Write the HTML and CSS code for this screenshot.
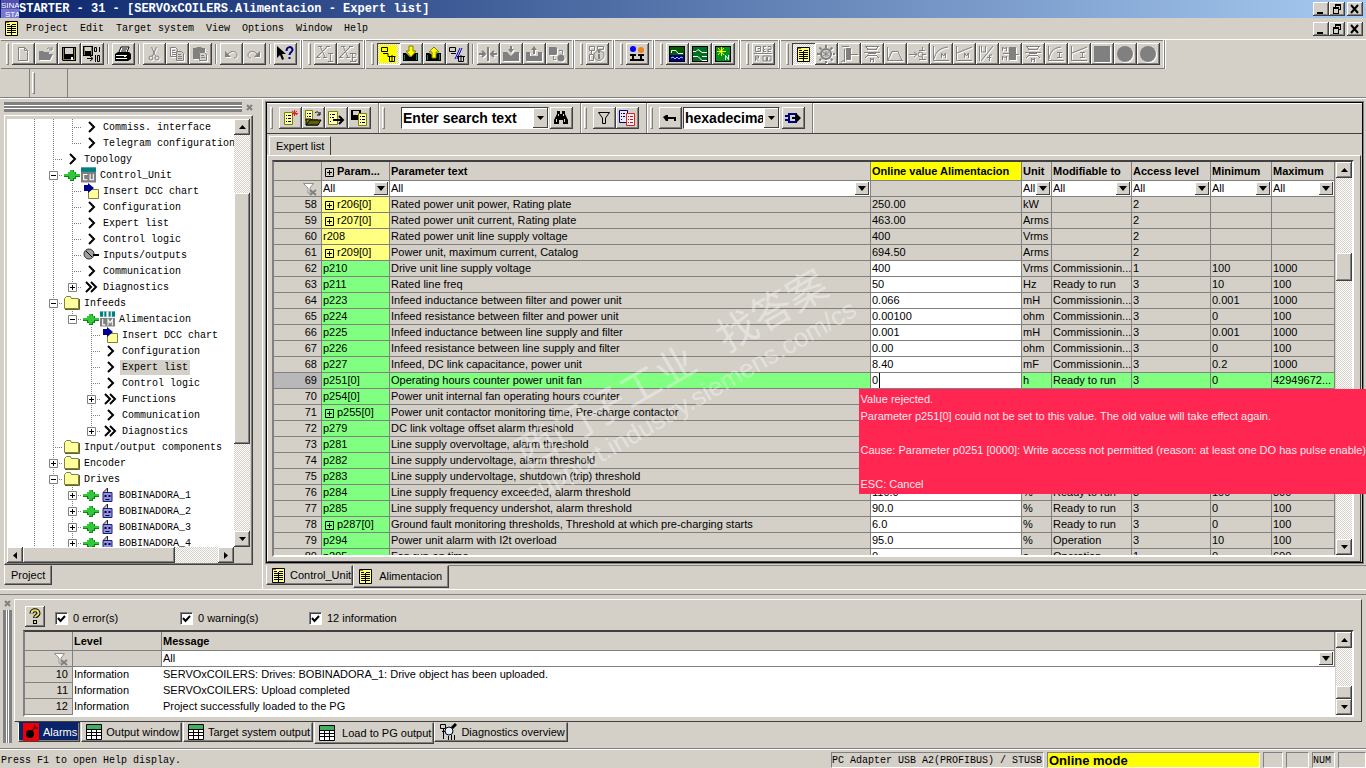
FILE: index.html
```html
<!DOCTYPE html>
<html lang="en">
<head>
    <meta charset="UTF-8">
    <meta name="viewport" content="width=device-width, initial-scale=1.0">
    <title>STARTER - 31 - [SERVOxCOILERS.Alimentacion - Expert list]</title>
    <link rel="stylesheet" href="styles.css">
</head>

<body>
    <!-- Icon sprite -->
    <svg class="sprite" width="0" height="0" aria-hidden="true">
        <symbol id="i-new" viewBox="-1 -1 18 18"><path d="M3.500 1.500h6l3 3v10h-9zM9.500 1.500v3h3" fill="none" stroke="currentColor"/></symbol>
        <symbol id="i-open" viewBox="-1 -1 18 18"><path d="M1 13V5h4l1 1h5v2h4l-3 6H1z" fill="currentColor"/><path d="M9 3c2-2 4-1 5 1M14 1v3h-3" fill="none" stroke="currentColor"/></symbol>
        <symbol id="i-save" viewBox="-1 -1 18 18"><path d="M1 1h14v14H2l-1-1z" fill="#000"/><path d="M2 2h1v11h10V2h1v12H2z" fill="#808040"/><path d="M4 2h8v6H4z" fill="#d4d0c8"/><path d="M10 11h2v3h-2z" fill="#fff"/></symbol>
        <symbol id="i-save-bin" viewBox="0 0 18 18"><path d="M0 1h10v10H0z" fill="#000"/><path d="M2 2h6v4H2z" fill="#d4d0c8"/><path d="M1 2h1v8H1zM8 2h1v8H8z" fill="#808040"/><path d="M11.500 2.500h2v4h-2zM16.500 2v5M4 13.500h5M7 11l3 2.500L7 16M12.500 10v7M14.500 10.500h2v6h-2z" fill="none" stroke="#000"/></symbol>
        <symbol id="i-print" viewBox="0 -1 18 18"><path d="M5 6l2-5h8l-2 5" fill="#fff" stroke="#000"/><path d="M8 3h5M7 5h5" stroke="#000"/><path d="M1 8l3-2h11l2 2v5l-3 2H1z" fill="#000"/><path d="M2 9h11v1H2zM2 12h11v1H2z" fill="#fff"/><path d="M10 10.500h2" stroke="#ff0"/></symbol>
        <symbol id="i-cut" viewBox="-1 -1 18 18"><path d="M5.500 1l4 9M10.500 1l-4 9" stroke="currentColor" fill="none"/><circle cx="5" cy="12" r="2" fill="none" stroke="currentColor"/><circle cx="11" cy="12" r="2" fill="none" stroke="currentColor"/></symbol>
        <symbol id="i-copy" viewBox="-1 -1 18 18"><path d="M1.500 1.500h5l2 2v7h-7zM3 4.500h3M3 6.500h4M3 8.500h4" fill="none" stroke="currentColor"/><path d="M7.500 5.500h5l2 2v7h-7z" fill="#d4d0c8" stroke="currentColor"/><path d="M9 8.500h3M9 10.500h4M9 12.500h4" stroke="currentColor"/></symbol>
        <symbol id="i-paste" viewBox="-1 -1 18 18"><path d="M1 2h3l1-1h4l1 1h3v4H7v7H1z" fill="currentColor"/><path d="M7.500 6.500h5l2 2v6h-7z" fill="#d4d0c8" stroke="currentColor"/><path d="M9 9.500h3M9 11.500h4" stroke="currentColor"/></symbol>
        <symbol id="i-undo" viewBox="-1 -1 18 18"><path d="M5 8c3-4 9-3 9 1 0 2-1 3-3 3" fill="none" stroke="currentColor"/><path d="M2 5v6h6z" fill="currentColor"/></symbol>
        <symbol id="i-redo" viewBox="-1 -1 18 18"><path d="M11 8c-3-4-9-3-9 1 0 2 1 3 3 3" fill="none" stroke="currentColor"/><path d="M14 5v6H8z" fill="currentColor"/></symbol>
        <symbol id="i-whats" viewBox="0 -1 18 18"><path d="M1 0v12l3-3 2 5 2-1-2-5h4z" fill="#000"/><path d="M10.500 5c0-5 6-5 6-1 0 2-3 2-3 5" fill="none" stroke="#000080" stroke-width="2"/><path d="M12.500 11h2v2h-2z" fill="#000080"/></symbol>
        <symbol id="i-xi" viewBox="0 -1 18 18"><path d="M4 0l5 11M12 0L1 11" fill="none" stroke="currentColor" stroke-width="1"/><path d="M2 .5h4M10 .5h4M0 11.500h4M7 11.500h4M12 7.500h5M14.500 8v7M12 15.500h5" fill="none" stroke="currentColor"/></symbol>
        <symbol id="i-xe" viewBox="0 -1 18 18"><path d="M4 0l5 11M12 0L1 11" fill="none" stroke="currentColor" stroke-width="1"/><path d="M2 .5h4M10 .5h4M0 11.500h4M7 11.500h4M11 7.500h6v2M13.500 8v7M11 15.500h6v-2M13.500 11.500h3" fill="none" stroke="currentColor"/></symbol>
        <symbol id="i-online" viewBox="0 0 18 18"><path d="M0 0h18v18H0z" fill="#ff0"/><path d="M2.500 2.500h6v4h-6zM4 8.500h5v3h3M9.500 11.500h7M10.500 11.500v5h5v-5M13 10v7" fill="none" stroke="#000"/></symbol>
        <symbol id="i-down" viewBox="0 -1 18 18"><path d="M1 7h3l4 4 5-4h3v8H1z" fill="#000"/><path d="M2 9h1v5H2zM14 8h1v6h-1z" fill="#008080"/><path d="M7 0h4v5h3l-5 6-5-6h3z" fill="#ff0" stroke="#808000"/></symbol>
        <symbol id="i-up" viewBox="0 -1 18 18"><path d="M1 7h3l4 2 5-2h3v8H1z" fill="#000"/><path d="M2 9h1v5H2zM14 8h1v6h-1z" fill="#008080"/><path d="M7 12h4V6h3L9 1 4 6h3z" fill="#ff0" stroke="#808000"/></symbol>
        <symbol id="i-offline" viewBox="-1 -1 18 18"><path d="M.5 1.500h6v4h-6zM2 7.500h5M9.500 10.500h5v5h-5zM8 10.500h8M12 9v7" fill="none" stroke="#000"/><path d="M6 13l5-11M8 13l5-11" stroke="#0000c0"/></symbol>
        <symbol id="i-compare" viewBox="0 -1 18 18"><path d="M0 8h6M3 5l3 3-3 3M18 8h-6M15 5l-3 3 3 3M9 1v14" fill="none" stroke="currentColor" stroke-width="2"/></symbol>
        <symbol id="i-ram" viewBox="0 -1 18 18"><path d="M1 6h4l4 4 4-4h4v9H1zM8 0h2v3h2L9 7 6 3h2z" fill="currentColor"/></symbol>
        <symbol id="i-rom" viewBox="0 -1 18 18"><path d="M1 6h4v4h8V6h4v9H1zM8 8h2V4h2L9 0 6 4h2z" fill="currentColor"/></symbol>
        <symbol id="i-card" viewBox="0 -1 18 18"><path d="M1 1h7l1 1v6l-1 1H1z" fill="currentColor"/><circle cx="13" cy="12" r="3.500" fill="currentColor"/><path d="M11 4.500h3.500V8M5.500 10v3.500H8" fill="none" stroke="currentColor"/></symbol>
        <symbol id="i-info" viewBox="0 0 18 18"><path d="M1.500 1.500h5v4h-5zM9.500 1.500h6v3h-6zM1.500 9.500h4v6h-4zM3.500 6v3" fill="none" stroke="currentColor"/><circle cx="11" cy="10.500" r="5" fill="#d4d0c8" stroke="currentColor"/><path d="M11 9v5M11 6v2" stroke="currentColor" stroke-width="2"/></symbol>
        <symbol id="i-nodes" viewBox="0 0 18 18"><circle cx="5" cy="4" r="3" fill="#00f"/><circle cx="13" cy="5" r="3" fill="#f08020"/><path d="M2 9h6v2H6v3h6v-3h-2V9h6v2h-2v3h2v2H2v-2h2v-3H2z" fill="#000"/></symbol>
        <symbol id="i-trace" viewBox="-1 -1 18 18"><path d="M0 0h16v16H0z" fill="#000"/><path d="M1 1h14v8H1z" fill="#006000"/><path d="M2.500 7V4.500H7l2 3h5" fill="none" stroke="#fff"/><path d="M1 9h14v6H1z" fill="#000080"/><path d="M2 12l2-1 2 2 2-2 2 2 2-2 2 1" fill="none" stroke="#c0c0ff"/></symbol>
        <symbol id="i-fgen" viewBox="-1 -1 18 18"><path d="M0 0h16v16H0z" fill="#000"/><path d="M1 1h14v14H1z" fill="#007020"/><path d="M1 5.500h3l2-2 4 3h5M1 10.500h5l4 4h5M10 10.500h5" fill="none" stroke="#fff"/></symbol>
        <symbol id="i-tune" viewBox="-1 -1 18 18"><path d="M0 0h16v16H0z" fill="#000"/><path d="M1 1h14v14H1z" fill="#009020"/><path d="M6.500 1v9M2 5.500h9M3 2l6 7M9 2L3 9" stroke="#ff0"/><path d="M10.500 14V9.500l3 4V9" fill="none" stroke="#fff"/></symbol>
        <symbol id="i-e2r" viewBox="0 0 18 18"><path d="M1.500 1.500h5v5h-5zM4 3.500h2M9 1.500h3M9.500 1v6M9 4.500h2M9 6.500h3M14 1.500h3v3h-3v2h3M0 8.500h18M1.500 16v-5h3v2h-3l3 3M9 11h8v5H9z" fill="none" stroke="currentColor"/><path d="M12 12h2v4h-2z" fill="currentColor"/></symbol>
        <symbol id="i-list" viewBox="0 0 13 15"><path d="M.5.5h12v14H.5z" fill="#ffff80" stroke="#000"/><path d="M2 3.500h3M7 3.500h4M2 5.500h4M7 5.500h4M2 7.500h4M7 7.500h4M2 9.500h4M7 9.500h4M2 11.500h4M7 11.500h4M6.500 4v10" stroke="#000"/><path d="M1 1h3v1H1z" fill="#c06000"/></symbol>
        <symbol id="i-gear" viewBox="0 0 18 18"><path d="M9 0v18M0 9h18M2.500 2.500l13 13M15.500 2.500l-13 13" stroke="currentColor" stroke-width="2" stroke-dasharray="3 1"/><circle cx="9" cy="9" r="5" fill="#d4d0c8" stroke="currentColor" stroke-width="2"/><path d="M6 7l6 4M6 11l6-4M9 6v6" stroke="currentColor"/></symbol>
        <symbol id="i-brake" viewBox="0 0 18 18"><path d="M6 3h5v12H6z" fill="currentColor"/><path d="M2 1.500h7M11 9.500h7M5 15l-4 2M4.500 4v13" fill="none" stroke="currentColor"/></symbol>
        <symbol id="i-bridge" viewBox="0 0 18 18"><path d="M2 1.500h14M4 4.500h10M1 7.500h16M4 10.500h10M2 1l3 3M16 1l-3 3M2 13l3-3M16 13l-3-3M7.500 17v-4l1.500 2 1.500-2v4" fill="none" stroke="currentColor"/><path d="M5 4h8v1H5zM5 8h8v1H5z" fill="currentColor"/></symbol>
        <symbol id="i-ramp" viewBox="0 0 18 18"><path d="M1.500 2v13.500H17M2 15L6 6.500h6l4 9" fill="none" stroke="currentColor"/></symbol>
        <symbol id="i-limit" viewBox="0 0 18 18"><path d="M0 9.500h8M5 7l3 2.500L5 12M10 5.500h6M13.500 2v4M17 9.500h-4M10 14.500h7M13.500 12v3" fill="none" stroke="currentColor"/><circle cx="11.500" cy="9.500" r="2.500" fill="none" stroke="currentColor"/></symbol>
        <symbol id="i-curve-m" viewBox="0 0 18 18"><path d="M1.500 1v14.500H17M2 14C3 8 7 3 16 2M9.500 13V8l2 3 2-3v5" fill="none" stroke="currentColor"/></symbol>
        <symbol id="i-lin-m" viewBox="0 0 18 18"><path d="M1.500 1v14.500H17M2 8l15-6M9.500 13V8l2 3 2-3v5" fill="none" stroke="currentColor"/></symbol>
        <symbol id="i-uf" viewBox="0 0 18 18"><path d="M3.500 1v6h4V1M3 16L15 1M11.500 16v-6H14M9 12.500h4M1.500 1v15" fill="none" stroke="currentColor"/></symbol>
        <symbol id="i-mblock" viewBox="0 0 18 18"><path d="M8 2h7v13H8z" fill="currentColor"/><path d="M1.500 6V2l2 2 2-2v4M1.500 15v-4l2 2 2-2v4M2 8.500h6M15 9.500h3" fill="none" stroke="currentColor"/></symbol>
        <symbol id="i-curve-i" viewBox="0 0 18 18"><path d="M1.500 1v14.500H17M2 14C3 8 5 3 14 2M10 7.500h5M12.500 7v6M10 12.500h5" fill="none" stroke="currentColor"/></symbol>
        <symbol id="i-lin-i" viewBox="0 0 18 18"><path d="M1.500 1v14.500H17M2 8l15-6M10 7.500h5M12.500 7v6M10 12.500h5" fill="none" stroke="currentColor"/></symbol>
        <symbol id="i-square" viewBox="0 0 18 18"><path d="M1 1h16v16H1z" fill="currentColor"/></symbol>
        <symbol id="i-circle" viewBox="0 0 18 18"><circle cx="9" cy="9" r="8" fill="currentColor"/></symbol>
        <symbol id="i-min" viewBox="0 0 12 10"><path d="M2 8h6v2H2z"/></symbol>
        <symbol id="i-restore" viewBox="0 0 12 10"><path d="M4 0h6v6H8V5h1V2H5v1H4zM2 3h6v7H2zM3 5v4h4V5z" fill-rule="evenodd"/></symbol>
        <symbol id="i-close" viewBox="0 0 12 10"><path d="M2 1l7 8M9 1L2 9" stroke="#000" stroke-width="2"/></symbol>
        <symbol id="i-x" viewBox="0 0 7 7"><path d="M1 1l5 5M6 1L1 6" stroke="#808080" stroke-width="2"/></symbol>
        <symbol id="i-a-up" viewBox="0 0 7 4"><path d="M0 4h7L3.500 0z"/></symbol>
        <symbol id="i-a-down" viewBox="0 0 7 4"><path d="M0 0h7L3.500 4z"/></symbol>
        <symbol id="i-a-left" viewBox="0 0 4 7"><path d="M4 0v7L0 3.500z"/></symbol>
        <symbol id="i-a-right" viewBox="0 0 4 7"><path d="M0 0v7l4-3.500z"/></symbol>
        <symbol id="i-plus" viewBox="0 0 9 9"><path d="M.5.5h8v8h-8z" fill="#fff" stroke="#808080"/><path d="M2 4.500h5M4.500 2v5" stroke="#000"/></symbol>
        <symbol id="i-minus" viewBox="0 0 9 9"><path d="M.5.5h8v8h-8z" fill="#fff" stroke="#808080"/><path d="M2 4.500h5" stroke="#000"/></symbol>
        <symbol id="i-cell-plus" viewBox="0 0 9 9"><path d="M.5.5h8v8h-8zM2 4.500h5M4.500 2v5" fill="none" stroke="#000"/></symbol>
        <symbol id="i-chev" viewBox="0 0 16 16"><path d="M6 3l5 5-5 5" fill="none" stroke="#000" stroke-width="2"/></symbol>
        <symbol id="i-chev2" viewBox="0 0 16 16"><path d="M3 3l5 5-5 5M8 3l5 5-5 5" fill="none" stroke="#000" stroke-width="2"/></symbol>
        <symbol id="i-folder" viewBox="0 0 16 16"><path d="M.5 13.500v-10l2-2h4l1 2h7v10z" fill="#ffff9c" stroke="#808040"/><path d="M1 14.500h14.500V4" fill="none" stroke="#606030"/></symbol>
        <symbol id="i-link" viewBox="0 0 16 16"><path d="M0 7h4V5h2V3h4v2h2v2h4v3h-4v2h-2v2H6v-2H4v-2H0z" fill="#108018"/><path d="M0 7h4V5h2V3h3v2h2v2h5v2H0zM5 9h6v2H5zM6 11h3v2H6z" fill="#30c838"/></symbol>
        <symbol id="i-cu" viewBox="0 0 14 14"><path d="M0 0h14v14H0z" fill="#808080"/><path d="M0 0h14v4H0z" fill="#008080"/><path d="M6 6.500H2.500v5H6M8.500 6v5.500h3V6" fill="none" stroke="#fff"/></symbol>
        <symbol id="i-lm" viewBox="0 0 14 14"><path d="M0 0h14v14H0z" fill="#808080"/><path d="M0 0h14v6H0z" fill="#fff"/><path d="M0 0h3v5H0zM4 0h2v5H4zM8 0h2v5H8zM11 0h3v5h-3z" fill="#008080"/><path d="M2.500 7v5.500H5M7.500 13V7.500l2 3 2-3V13" fill="none" stroke="#fff"/></symbol>
        <symbol id="i-dcc" viewBox="0 0 16 16"><path d="M5.500 6.500h10v9h-10z" fill="#ffff9c" stroke="#808040"/><path d="M1 2h4V0l6 5-6 5V8H1z" fill="#000090"/></symbol>
        <symbol id="i-io" viewBox="0 0 16 16"><circle cx="6" cy="7" r="5" fill="#a0a0a0" stroke="#303030"/><path d="M3 4l6 6" stroke="#000"/><path d="M10 7h6v2h-6z" fill="#000"/></symbol>
        <symbol id="i-drive" viewBox="0 0 14 16"><path d="M2.500 5.500h9v9h-9z" fill="#9090f0" stroke="#202060"/><path d="M3 5l4-4v4" fill="#d4d0c8" stroke="#202020"/><path d="M4 8h2v2H4zM8 8h2v2H8zM5 12h4v1H5z" fill="#000"/></symbol>
        <symbol id="i-filter" viewBox="-1 -1 18 18"><path d="M2.500 2.500h11L9.500 8v5.500h-3V8z" fill="none" stroke="#000"/></symbol>
        <symbol id="i-nofilter" viewBox="0 0 14 13"><path d="M.5.500h10L7 5v5H5V5z" fill="#fff" stroke="#909090"/><path d="M7 7l6 5M13 7l-6 5" stroke="#808080" stroke-width="2"/></symbol>
        <symbol id="i-listnew" viewBox="-1 -1 18 18"><path d="M2.500 2.500h8v12h-8z" fill="#ffffb0" stroke="#808000"/><path d="M4 5.500h1M4 8.500h1M4 11.500h1M6 5.500h3M6 8.500h3M6 11.500h3" stroke="#000"/><path d="M12.500 0v6M10 3.500h6M10 1l5 4M15 1l-5 4" stroke="#e02020"/></symbol>
        <symbol id="i-listopen" viewBox="0 -1 18 18"><path d="M1.500.5h7v10h-7z" fill="#ffffb0" stroke="#808000"/><path d="M3 3.500h1M5 3.500h2M3 6.500h1M5 6.500h2M11 3c2-2 4-1 4 1M16 2v3h-3" fill="none" stroke="#000"/><path d="M2 15V9h5l1 1h6v5z" fill="#808000" stroke="#000"/><path d="M2 15l4-5h11l-3 5z" fill="#606000" stroke="#000"/></symbol>
        <symbol id="i-listgo" viewBox="0 -1 18 18"><path d="M1.500 1.500h9v13h-9z" fill="#ffffb0" stroke="#808000"/><path d="M3 4.500h1M3 7.500h1M3 11.500h1M5 4.500h3M5 7.500h2" stroke="#000"/><path d="M6 10h9M12 6l4 4-4 4" fill="none" stroke="#000" stroke-width="2"/></symbol>
        <symbol id="i-listsave" viewBox="0 0 18 18"><path d="M1 1h10v10H1z" fill="#000"/><path d="M3 2h6v4H3z" fill="#d4d0c8"/><path d="M8.500 4.500h8v12h-8z" fill="#ffffb0" stroke="#808000"/><path d="M10 7.500h1M10 10.500h1M10 13.500h1M12 7.500h3M12 10.500h3M12 13.500h3" stroke="#000"/></symbol>
        <symbol id="i-binoc" viewBox="-1 -1 18 18"><path d="M4 1h3v3h2V1h3v3l3 6v4h-5v-4H6v4H1v-4l3-6z" fill="#000"/><path d="M3.500 9v3M11.500 9v3M5.500 4v2M10.500 4v2" stroke="#d4d0c8"/></symbol>
        <symbol id="i-cmplist" viewBox="0 -1 18 18"><path d="M1.500.5h8v12h-8z" fill="#e8e8ff" stroke="#000080"/><path d="M3 3.500h1M3 6.500h1M3 9.500h1M5 3.500h2M5 6.500h2" stroke="#000"/><path d="M8.500 3.500h8v12h-8z" fill="#fff0f0" stroke="#e02020"/><path d="M10 6.500h1M10 9.500h1M10 12.500h1M12 6.500h3M12 9.500h3M12 12.500h3" stroke="#a02020"/></symbol>
        <symbol id="i-key" viewBox="-1 -1 18 18"><path d="M1 7l3-2h2v2h8v4h-2V9H6v2H4z" fill="#000"/></symbol>
        <symbol id="i-goto" viewBox="0 -1 18 18"><path d="M5 4h7v8H5zM1 6h3M1 10h3" fill="none" stroke="#000080" stroke-width="2"/><path d="M8 7h4V3l5 5-5 5V9H8z" fill="#000"/></symbol>
        <symbol id="i-quest" viewBox="0 0 12 16"><path d="M2.500 5.500c0-4.500 7-4.500 7 0 0 2-3.500 2-3.500 4.500" fill="none" stroke="#000" stroke-width="4"/><path d="M2.500 5.500c0-4.500 7-4.500 7 0 0 2-3.500 2-3.500 4" fill="none" stroke="#e8e060" stroke-width="2"/><path d="M4 12h4v4H4z" fill="#000"/><path d="M5 13h2v2H5z" fill="#e8e060"/></symbol>
        <symbol id="i-bomb" viewBox="0 0 16 18"><path d="M0 0h16v18H0z" fill="#f00000"/><circle cx="7" cy="11" r="4" fill="#000"/><path d="M9 8l3-4M11 2l3 4M10 5h5" stroke="#400000"/></symbol>
        <symbol id="i-grid" viewBox="0 0 16 16"><path d="M.5.5h15v15H.5z" fill="#fff" stroke="#000"/><path d="M1 1h14v4H1z" fill="#40b060"/><path d="M1 5.500h14M1 8.500h14M1 11.500h14M5.500 5v11M10.500 5v11" stroke="#000"/></symbol>
        <symbol id="i-diag" viewBox="0 0 18 18"><path d="M1.500 1.500h5v4h-5zM4.500 6v10M3 8.500h4M9.500 13v4M12.500 12v5M15.500 12v5" fill="none" stroke="#000"/><circle cx="10" cy="8" r="4" fill="#e0f0ff" stroke="#000"/><path d="M13 5l4-4" stroke="#000" stroke-width="3"/></symbol>
    </svg>

    <!-- Title bar -->
    <header class="title-bar">
        <svg class="app-icon" width="18" height="18" viewBox="0 0 18 18"><path d="M0 0h18v18H0z" fill="#5050b0"/><path d="M0 9h18v9H0z" fill="#7878d0"/><text x="0" y="8" font-size="8">SINA</text><text x="4" y="17" font-size="8">STA</text></svg>
        <h1>STARTER - 31 - [SERVOxCOILERS.Alimentacion - Expert list]</h1>
        <div class="window-buttons">
            <button aria-label="Minimize"><svg><use href="#i-min"/></svg></button>
            <button aria-label="Restore"><svg><use href="#i-restore"/></svg></button>
            <button aria-label="Close" class="close"><svg><use href="#i-close"/></svg></button>
        </div>
    </header>

    <nav class="menu-bar">
        <svg class="doc-icon"><use href="#i-list"/></svg>
        <a href="#">Project</a>
        <a href="#">Edit</a>
        <a href="#">Target system</a>
        <a href="#">View</a>
        <a href="#">Options</a>
        <a href="#">Window</a>
        <a href="#">Help</a>
        <div class="window-buttons">
            <button aria-label="Minimize document"><svg><use href="#i-min"/></svg></button>
            <button aria-label="Restore document"><svg><use href="#i-restore"/></svg></button>
            <button aria-label="Close document" class="close"><svg><use href="#i-close"/></svg></button>
        </div>
    </nav>

    <!-- Toolbars -->
    <div class="toolbar-row">
        <div class="toolbar">
            <button disabled aria-label="New"><svg><use href="#i-new"/></svg></button>
            <button disabled aria-label="Open"><svg><use href="#i-open"/></svg></button>
            <button aria-label="Save"><svg><use href="#i-save"/></svg></button>
            <button aria-label="Save and compile"><svg><use href="#i-save-bin"/></svg></button>
            <span class="sep"></span>
            <button aria-label="Print"><svg><use href="#i-print"/></svg></button>
            <span class="sep"></span>
            <button disabled aria-label="Cut"><svg><use href="#i-cut"/></svg></button>
            <button disabled aria-label="Copy"><svg><use href="#i-copy"/></svg></button>
            <button disabled aria-label="Paste"><svg><use href="#i-paste"/></svg></button>
            <span class="sep"></span>
            <button disabled aria-label="Undo"><svg><use href="#i-undo"/></svg></button>
            <button disabled aria-label="Redo"><svg><use href="#i-redo"/></svg></button>
            <span class="sep"></span>
            <button aria-label="Context help"><svg><use href="#i-whats"/></svg></button>
        </div>
        <div class="toolbar">
            <button disabled aria-label="Import"><svg><use href="#i-xi"/></svg></button>
            <button disabled aria-label="Export"><svg><use href="#i-xe"/></svg></button>
        </div>
        <div class="toolbar">
            <button class="pressed" aria-label="Connect to target system"><svg><use href="#i-online"/></svg></button>
            <button aria-label="Download"><svg><use href="#i-down"/></svg></button>
            <button aria-label="Upload"><svg><use href="#i-up"/></svg></button>
            <button aria-label="Disconnect"><svg><use href="#i-offline"/></svg></button>
            <span class="sep"></span>
            <button disabled aria-label="Compare"><svg><use href="#i-compare"/></svg></button>
            <button disabled aria-label="Download to device"><svg><use href="#i-ram"/></svg></button>
            <button disabled aria-label="Load to PG"><svg><use href="#i-rom"/></svg></button>
            <button disabled aria-label="Copy RAM to ROM"><svg><use href="#i-card"/></svg></button>
        </div>
        <div class="toolbar">
            <button disabled aria-label="Device diagnostics"><svg><use href="#i-info"/></svg></button>
        </div>
        <div class="toolbar">
            <button aria-label="Accessible nodes"><svg><use href="#i-nodes"/></svg></button>
        </div>
        <div class="toolbar">
            <button aria-label="Trace"><svg><use href="#i-trace"/></svg></button>
            <button aria-label="Function generator"><svg><use href="#i-fgen"/></svg></button>
            <button aria-label="Controller setting"><svg><use href="#i-tune"/></svg></button>
        </div>
        <div class="toolbar">
            <button disabled aria-label="Restore settings"><svg><use href="#i-e2r"/></svg></button>
        </div>
        <div class="toolbar">
            <button class="pressed" aria-label="Expert list"><svg class="list-icon"><use href="#i-list"/></svg></button>
            <button disabled aria-label="Configuration"><svg><use href="#i-gear"/></svg></button>
            <button disabled aria-label="Brake control"><svg><use href="#i-brake"/></svg></button>
            <button disabled aria-label="Mechanics"><svg><use href="#i-bridge"/></svg></button>
            <button disabled aria-label="Ramp generator"><svg><use href="#i-ramp"/></svg></button>
            <button disabled aria-label="Limits"><svg><use href="#i-limit"/></svg></button>
            <button disabled aria-label="Torque curve"><svg><use href="#i-curve-m"/></svg></button>
            <button disabled aria-label="Torque limit"><svg><use href="#i-lin-m"/></svg></button>
            <button disabled aria-label="U/f control"><svg><use href="#i-uf"/></svg></button>
            <button disabled aria-label="Motor"><svg><use href="#i-mblock"/></svg></button>
            <button disabled aria-label="Power unit"><svg><use href="#i-bridge"/></svg></button>
            <button disabled aria-label="Current curve"><svg><use href="#i-curve-i"/></svg></button>
            <button disabled aria-label="Current limit"><svg><use href="#i-lin-i"/></svg></button>
            <button disabled aria-label="Stop"><svg><use href="#i-square"/></svg></button>
            <button disabled aria-label="Start"><svg><use href="#i-circle"/></svg></button>
            <button disabled aria-label="Release"><svg><use href="#i-circle"/></svg></button>
        </div>
    </div>
    <div class="toolbar-row spare">
        <span class="spare-start"></span>
        <span class="spare-bar"></span>
    </div>

    <div class="workspace">
        <!-- Project navigator -->
        <aside class="navigator">
            <div class="pane-grip">
                <span class="bar"></span>
                <button aria-label="Close navigator"><svg width="7" height="7"><use href="#i-x"/></svg></button>
            </div>
            <div class="tree-box">
                <ul class="tree">
                    <li><i class="v"></i><i class="v"></i><i class="t"></i><svg><use href="#i-chev"/></svg><span>Commiss. interface</span></li>
                    <li><i class="v"></i><i class="v"></i><i class="l"></i><svg><use href="#i-chev"/></svg><span>Telegram configuration</span></li>
                    <li><i class="v"></i><i class="t"></i><svg><use href="#i-chev"/></svg><span>Topology</span></li>
                    <li><i class="v"></i><i class="t"><svg class="box"><use href="#i-minus"/></svg></i><svg><use href="#i-link"/></svg><svg class="device"><use href="#i-cu"/></svg><span>Control_Unit</span></li>
                    <li><i class="v"></i><i class="v"></i><i class="t"></i><svg><use href="#i-dcc"/></svg><span>Insert DCC chart</span></li>
                    <li><i class="v"></i><i class="v"></i><i class="t"></i><svg><use href="#i-chev"/></svg><span>Configuration</span></li>
                    <li><i class="v"></i><i class="v"></i><i class="t"></i><svg><use href="#i-chev"/></svg><span>Expert list</span></li>
                    <li><i class="v"></i><i class="v"></i><i class="t"></i><svg><use href="#i-chev"/></svg><span>Control logic</span></li>
                    <li><i class="v"></i><i class="v"></i><i class="t"></i><svg><use href="#i-io"/></svg><span>Inputs/outputs</span></li>
                    <li><i class="v"></i><i class="v"></i><i class="t"></i><svg><use href="#i-chev"/></svg><span>Communication</span></li>
                    <li><i class="v"></i><i class="v"></i><i class="l"><svg class="box"><use href="#i-plus"/></svg></i><svg><use href="#i-chev2"/></svg><span>Diagnostics</span></li>
                    <li><i class="v"></i><i class="t"><svg class="box"><use href="#i-minus"/></svg></i><svg><use href="#i-folder"/></svg><span>Infeeds</span></li>
                    <li><i class="v"></i><i class="v"></i><i class="l"><svg class="box"><use href="#i-minus"/></svg></i><svg><use href="#i-link"/></svg><svg class="device"><use href="#i-lm"/></svg><span>Alimentacion</span></li>
                    <li><i class="v"></i><i class="v"></i><i></i><i class="t"></i><svg><use href="#i-dcc"/></svg><span>Insert DCC chart</span></li>
                    <li><i class="v"></i><i class="v"></i><i></i><i class="t"></i><svg><use href="#i-chev"/></svg><span>Configuration</span></li>
                    <li><i class="v"></i><i class="v"></i><i></i><i class="t"></i><svg><use href="#i-chev"/></svg><span class="selected">Expert list</span></li>
                    <li><i class="v"></i><i class="v"></i><i></i><i class="t"></i><svg><use href="#i-chev"/></svg><span>Control logic</span></li>
                    <li><i class="v"></i><i class="v"></i><i></i><i class="t"><svg class="box"><use href="#i-plus"/></svg></i><svg><use href="#i-chev2"/></svg><span>Functions</span></li>
                    <li><i class="v"></i><i class="v"></i><i></i><i class="t"></i><svg><use href="#i-chev"/></svg><span>Communication</span></li>
                    <li><i class="v"></i><i class="v"></i><i></i><i class="l"><svg class="box"><use href="#i-plus"/></svg></i><svg><use href="#i-chev2"/></svg><span>Diagnostics</span></li>
                    <li><i class="v"></i><i class="t"></i><svg><use href="#i-folder"/></svg><span>Input/output components</span></li>
                    <li><i class="v"></i><i class="t"><svg class="box"><use href="#i-plus"/></svg></i><svg><use href="#i-folder"/></svg><span>Encoder</span></li>
                    <li><i class="v"></i><i class="t"><svg class="box"><use href="#i-minus"/></svg></i><svg><use href="#i-folder"/></svg><span>Drives</span></li>
                    <li><i class="v"></i><i class="v"></i><i class="t"><svg class="box"><use href="#i-plus"/></svg></i><svg><use href="#i-link"/></svg><svg class="device"><use href="#i-drive"/></svg><span>BOBINADORA_1</span></li>
                    <li><i class="v"></i><i class="v"></i><i class="t"><svg class="box"><use href="#i-plus"/></svg></i><svg><use href="#i-link"/></svg><svg class="device"><use href="#i-drive"/></svg><span>BOBINADORA_2</span></li>
                    <li><i class="v"></i><i class="v"></i><i class="t"><svg class="box"><use href="#i-plus"/></svg></i><svg><use href="#i-link"/></svg><svg class="device"><use href="#i-drive"/></svg><span>BOBINADORA_3</span></li>
                    <li><i class="v"></i><i class="v"></i><i class="t"><svg class="box"><use href="#i-plus"/></svg></i><svg><use href="#i-link"/></svg><svg class="device"><use href="#i-drive"/></svg><span>BOBINADORA_4</span></li>
                </ul>
                <div class="scrollbar">
                    <button aria-label="Scroll up"><svg width="7" height="4"><use href="#i-a-up"/></svg></button>
                    <div class="track tree-track"><span class="thumb"></span></div>
                    <button aria-label="Scroll down"><svg width="7" height="4"><use href="#i-a-down"/></svg></button>
                </div>
                <div class="scrollbar horizontal">
                    <button aria-label="Scroll left"><svg width="4" height="7"><use href="#i-a-left"/></svg></button>
                    <div class="track tree-htrack"><span class="thumb"></span></div>
                    <button aria-label="Scroll right"><svg width="4" height="7"><use href="#i-a-right"/></svg></button>
                </div>
            </div>
            <button class="tab navigator-tab">Project</button>
        </aside>

        <!-- Expert list window -->
        <main class="documents">
            <section class="window">
                <div class="list-toolbar">
                    <div class="group">
                        <button aria-label="New list"><svg><use href="#i-listnew"/></svg></button>
                        <button aria-label="Open list"><svg><use href="#i-listopen"/></svg></button>
                        <button aria-label="Export list"><svg><use href="#i-listgo"/></svg></button>
                        <button aria-label="Save list"><svg><use href="#i-listsave"/></svg></button>
                    </div>
                    <div class="group search">
                        <select class="combo search-text" aria-label="Search text"><option>Enter search text</option></select>
                        <button aria-label="Find"><svg><use href="#i-binoc"/></svg></button>
                    </div>
                    <div class="group">
                        <button aria-label="Filter"><svg><use href="#i-filter"/></svg></button>
                        <button aria-label="Compare lists"><svg><use href="#i-cmplist"/></svg></button>
                    </div>
                    <div class="group">
                        <button aria-label="Access rights"><svg><use href="#i-key"/></svg></button>
                        <select class="combo number-format" aria-label="Number format"><option>hexadecimal</option></select>
                        <button aria-label="Go to"><svg><use href="#i-goto"/></svg></button>
                    </div>
                </div>
                <div class="list-tabs"><button>Expert list</button></div>
                <div class="list-panel">
                    <div class="table-frame">
                        <div class="table-clip">
                            <table class="params">
                                <colgroup>
                                    <col class="c-num"><col class="c-param"><col><col class="c-value"><col class="c-unit"><col class="c-mod"><col class="c-access"><col class="c-min"><col class="c-max">
                                </colgroup>
                                <thead>
                                    <tr><th></th><th class="exp"><svg><use href="#i-cell-plus"/></svg>Param...</th><th>Parameter text</th><th class="online">Online value Alimentacion</th><th>Unit</th><th>Modifiable to</th><th>Access level</th><th>Minimum</th><th>Maximum</th></tr>
                                    <tr class="filters">
                                        <td class="num"><svg class="nofilter"><use href="#i-nofilter"/></svg></td>
                                        <td><select aria-label="Filter parameter"><option>All</option></select></td>
                                        <td><select aria-label="Filter parameter text"><option>All</option></select></td>
                                        <td class="off"></td>
                                        <td><select aria-label="Filter unit"><option>All</option></select></td>
                                        <td><select aria-label="Filter modifiable to"><option>All</option></select></td>
                                        <td><select aria-label="Filter access level"><option>All</option></select></td>
                                        <td><select aria-label="Filter minimum"><option>All</option></select></td>
                                        <td><select aria-label="Filter maximum"><option>All</option></select></td>
                                    </tr>
                                </thead>
                                <tbody>
                                    <tr class="read"><td>58</td><td class="exp"><svg><use href="#i-cell-plus"/></svg>r206[0]</td><td>Rated power unit power, Rating plate</td><td>250.00</td><td>kW</td><td></td><td>2</td><td></td><td></td></tr>
                                    <tr class="read"><td>59</td><td class="exp"><svg><use href="#i-cell-plus"/></svg>r207[0]</td><td>Rated power unit current, Rating plate</td><td>463.00</td><td>Arms</td><td></td><td>2</td><td></td><td></td></tr>
                                    <tr class="read"><td>60</td><td>r208</td><td>Rated power unit line supply voltage</td><td>400</td><td>Vrms</td><td></td><td>2</td><td></td><td></td></tr>
                                    <tr class="read"><td>61</td><td class="exp"><svg><use href="#i-cell-plus"/></svg>r209[0]</td><td>Power unit, maximum current, Catalog</td><td>694.50</td><td>Arms</td><td></td><td>2</td><td></td><td></td></tr>
                                    <tr><td>62</td><td>p210</td><td>Drive unit line supply voltage</td><td>400</td><td>Vrms</td><td>Commissionin...</td><td>1</td><td>100</td><td>1000</td></tr>
                                    <tr><td>63</td><td>p211</td><td>Rated line freq</td><td>50</td><td>Hz</td><td>Ready to run</td><td>3</td><td>10</td><td>100</td></tr>
                                    <tr><td>64</td><td>p223</td><td>Infeed inductance between filter and power unit</td><td>0.066</td><td>mH</td><td>Commissionin...</td><td>3</td><td>0.001</td><td>1000</td></tr>
                                    <tr><td>65</td><td>p224</td><td>Infeed resistance between filter and power unit</td><td>0.00100</td><td>ohm</td><td>Commissionin...</td><td>3</td><td>0</td><td>100</td></tr>
                                    <tr><td>66</td><td>p225</td><td>Infeed inductance between line supply and filter</td><td>0.001</td><td>mH</td><td>Commissionin...</td><td>3</td><td>0.001</td><td>1000</td></tr>
                                    <tr><td>67</td><td>p226</td><td>Infeed resistance between line supply and filter</td><td>0.00</td><td>ohm</td><td>Commissionin...</td><td>3</td><td>0</td><td>100</td></tr>
                                    <tr><td>68</td><td>p227</td><td>Infeed, DC link capacitance, power unit</td><td>8.40</td><td>mF</td><td>Commissionin...</td><td>3</td><td>0.2</td><td>1000</td></tr>
                                    <tr class="current"><td>69</td><td>p251[0]</td><td>Operating hours counter power unit fan</td><td><input class="edit" type="text" value="0" aria-label="Online value p251[0]"></td><td>h</td><td>Ready to run</td><td>3</td><td>0</td><td>42949672...</td></tr>
                                    <tr><td>70</td><td>p254[0]</td><td>Power unit internal fan operating hours counter</td><td></td><td></td><td></td><td></td><td></td><td></td></tr>
                                    <tr><td>71</td><td class="exp"><svg><use href="#i-cell-plus"/></svg>p255[0]</td><td>Power unit contactor monitoring time, Pre-charge contactor</td><td></td><td></td><td></td><td></td><td></td><td></td></tr>
                                    <tr><td>72</td><td>p279</td><td>DC link voltage offset alarm threshold</td><td></td><td></td><td></td><td></td><td></td><td></td></tr>
                                    <tr><td>73</td><td>p281</td><td>Line supply overvoltage, alarm threshold</td><td></td><td></td><td></td><td></td><td></td><td></td></tr>
                                    <tr><td>74</td><td>p282</td><td>Line supply undervoltage, alarm threshold</td><td></td><td></td><td></td><td></td><td></td><td></td></tr>
                                    <tr><td>75</td><td>p283</td><td>Line supply undervoltage, shutdown (trip) threshold</td><td></td><td></td><td></td><td></td><td></td><td></td></tr>
                                    <tr><td>76</td><td>p284</td><td>Line supply frequency exceeded, alarm threshold</td><td>110.0</td><td>%</td><td>Ready to run</td><td>3</td><td>100</td><td>300</td></tr>
                                    <tr><td>77</td><td>p285</td><td>Line supply frequency undershot, alarm threshold</td><td>90.0</td><td>%</td><td>Ready to run</td><td>3</td><td>0</td><td>100</td></tr>
                                    <tr><td>78</td><td class="exp"><svg><use href="#i-cell-plus"/></svg>p287[0]</td><td>Ground fault monitoring thresholds, Threshold at which pre-charging starts</td><td>6.0</td><td>%</td><td>Ready to run</td><td>3</td><td>0</td><td>100</td></tr>
                                    <tr><td>79</td><td>p294</td><td>Power unit alarm with I2t overload</td><td>95.0</td><td>%</td><td>Operation</td><td>3</td><td>10</td><td>100</td></tr>
                                    <tr><td>80</td><td>p295</td><td>Fan run-on time</td><td>0</td><td>s</td><td>Operation</td><td>1</td><td>0</td><td>600</td></tr>
                                </tbody>
                            </table>
                        </div>
                        <div class="scrollbar">
                            <button aria-label="Scroll up"><svg width="7" height="4"><use href="#i-a-up"/></svg></button>
                            <div class="track params-track"><span class="thumb"></span></div>
                            <button aria-label="Scroll down"><svg width="7" height="4"><use href="#i-a-down"/></svg></button>
                        </div>
                    </div>
                </div>
                <div class="watermark" aria-hidden="true">
                    <p class="brand"><span>西门子工业</span><span>找答案</span></p>
                    <p>support.industry.siemens.com/cs</p>
                </div>
            </section>
            <div class="reject-tip" role="alert">
                <p>Value rejected.</p>
                <p>Parameter p251[0] could not be set to this value. The old value will take effect again.</p>
                <br>
                <p>Cause: Parameter p0251 [0000]: Write access not permitted (reason: at least one DO has pulse enable)</p>
                <br>
                <p>ESC: Cancel</p>
            </div>
            <div class="tab-row">
                <button class="tab"><svg width="13" height="15"><use href="#i-list"/></svg>Control_Unit</button>
                <button class="tab active"><svg width="13" height="15"><use href="#i-list"/></svg>Alimentacion</button>
                <span class="tab-fill"></span>
            </div>
        </main>
    </div>
    <div class="splitter"></div>

    <!-- Output pane -->
    <section class="output">
        <div class="side-grip">
            <button aria-label="Close output"><svg width="7" height="7"><use href="#i-x"/></svg></button>
            <span class="bar"></span>
        </div>
        <div class="output-main">
            <div class="output-panel">
                <div class="checks">
                    <button class="help" aria-label="Help"><svg width="12" height="16"><use href="#i-quest"/></svg></button>
                    <label><input type="checkbox" checked>0 error(s)</label>
                    <label><input type="checkbox" checked>0 warning(s)</label>
                    <label><input type="checkbox" checked>12 information</label>
                </div>
                <div class="table-frame">
                    <div class="table-clip">
                        <table class="messages">
                            <colgroup><col class="c-num"><col class="c-level"><col></colgroup>
                            <thead>
                                <tr><th></th><th>Level</th><th>Message</th></tr>
                                <tr class="filters"><td class="num"><svg class="nofilter"><use href="#i-nofilter"/></svg></td><td class="off"></td><td><select aria-label="Filter message"><option>All</option></select></td></tr>
                            </thead>
                            <tbody>
                                <tr><td>10</td><td>Information</td><td>SERVOxCOILERS: Drives: BOBINADORA_1: Drive object has been uploaded.</td></tr>
                                <tr><td>11</td><td>Information</td><td>SERVOxCOILERS: Upload completed</td></tr>
                                <tr><td>12</td><td>Information</td><td>Project successfully loaded to the PG</td></tr>
                            </tbody>
                        </table>
                    </div>
                    <div class="scrollbar">
                        <button aria-label="Scroll up"><svg width="7" height="4"><use href="#i-a-up"/></svg></button>
                        <div class="track messages-track"><span class="thumb"></span></div>
                        <button aria-label="Scroll down"><svg width="7" height="4"><use href="#i-a-down"/></svg></button>
                    </div>
                </div>
            </div>
            <div class="tab-row output-tabs">
                <button class="tab alarms"><svg width="16" height="18"><use href="#i-bomb"/></svg>Alarms</button>
                <button class="tab"><svg width="16" height="16"><use href="#i-grid"/></svg>Output window</button>
                <button class="tab"><svg width="16" height="16"><use href="#i-grid"/></svg>Target system output</button>
                <button class="tab active"><svg width="16" height="16"><use href="#i-grid"/></svg>Load to PG output</button>
                <button class="tab"><svg width="18" height="18"><use href="#i-diag"/></svg>Diagnostics overview</button>
            </div>
        </div>
    </section>

    <footer class="status-bar">
        <span class="hint">Press F1 to open Help display.</span>
        <span class="cell adapter">PC Adapter USB A2(PROFIBUS) / STUSB</span>
        <span class="cell mode">Online mode</span>
        <span class="cell caps"></span>
        <span class="cell"></span>
        <span class="cell">NUM</span>
        <span class="cell last"></span>
    </footer>
</body>
</html>
```

FILE: styles.css
```css
:root {
    --face: #d4d0c8;
    --light: #ffffff;
    --shadow: #808080;
    --dark: #404040;
    --mono: "Liberation Mono", "Noto Sans CJK SC", monospace;
    --sans: "Liberation Sans", "Noto Sans CJK SC", sans-serif;
}

*,
*::before {
    margin: 0;
    padding: 0;
    box-sizing: border-box;
}

body {
    display: flex;
    flex-direction: column;
    height: 100vh;
    overflow: hidden;
    background: var(--face);
    color: #000;
    font: 11px/15px var(--sans);
}

button {
    background: var(--face);
    border: none;
    color: #000;
    font: 11px/15px var(--sans);
}

a {
    color: #000;
    text-decoration: none;
}

.sprite {
    position: absolute;
}

/* Title and menu */
.title-bar {
    display: flex;
    align-items: center;
    flex: none;
    height: 18px;
    padding: 0 3px 0 1px;
    background: linear-gradient(to right, #0a246a, #a6caf0);
}

.app-icon text {
    fill: #fff;
    font-family: var(--sans);
}

h1 {
    color: #fff;
    font: bold 12px/18px var(--mono);
    white-space: nowrap;
}

.window-buttons {
    display: flex;
    margin-left: auto;
}

.window-buttons button {
    width: 16px;
    height: 14px;
    box-shadow: inset -1px -1px var(--dark), inset 1px 1px var(--light), inset -2px -2px var(--shadow);
}

.window-buttons svg {
    display: block;
    width: 12px;
    height: 10px;
    margin: 0 2px;
}

.window-buttons .close {
    margin-left: 2px;
}

.menu-bar {
    display: flex;
    align-items: center;
    gap: 12px;
    flex: none;
    height: 21px;
    padding: 0 3px 0 5px;
    font: 10px/16px var(--mono);
}

.menu-bar .doc-icon {
    width: 13px;
    height: 15px;
    margin-right: -4px;
}

/* Toolbars */
.toolbar-row {
    display: flex;
    flex: none;
    height: 30px;
    padding-left: 1px;
    border-top: 1px solid var(--light);
}

.toolbar {
    display: flex;
    align-items: center;
    padding: 0 4px 0 5px;
    border-right: 1px solid var(--shadow);
    border-bottom: 1px solid var(--shadow);
    box-shadow: inset -1px 0 var(--light), 1px 0 var(--light), inset 0 1px var(--shadow);
}

.toolbar + .toolbar {
    margin-left: 1px;
}

.toolbar::before,
.group::before {
    content: "";
    width: 3px;
    height: 22px;
    margin-right: 3px;
    border: 1px solid;
    border-color: var(--light) var(--shadow) var(--shadow) var(--light);
}

.toolbar button,
.group button {
    display: flex;
    align-items: center;
    flex: none;
    width: 23px;
    height: 22px;
    padding-left: 2px;
    box-shadow: inset -1px -1px var(--dark), inset 1px 1px var(--light), inset -2px -2px var(--shadow);
}

.toolbar svg,
.group svg {
    width: 18px;
    height: 18px;
}

.toolbar .list-icon {
    width: 13px;
    height: 15px;
    margin: 1px 0 0 3px;
}

.toolbar button:disabled {
    color: #808080;
}

.toolbar button:disabled svg {
    filter: drop-shadow(1px 1px 0 #fff);
}

.toolbar .pressed {
    background: repeating-conic-gradient(#fff 0 25%, var(--face) 0 50%) 0 0 / 2px 2px;
    box-shadow: inset 1px 1px var(--dark), inset -1px -1px var(--light);
}

.sep {
    width: 2px;
    height: 20px;
    margin: 0 3px;
    border-left: 1px solid var(--shadow);
    border-right: 1px solid var(--light);
}

.spare {
    height: 29px;
    border-top: none;
    border-bottom: 1px solid var(--shadow);
}

.spare-start {
    width: 29px;
    border-right: 1px solid var(--shadow);
}

.spare-bar {
    display: flex;
    width: 38px;
    padding: 3px 2px;
    border-right: 1px solid var(--shadow);
}

.spare-bar::before {
    content: "";
    width: 3px;
    height: 22px;
    border: 1px solid;
    border-color: var(--light) var(--shadow) var(--shadow) var(--light);
}

/* Workspace */
.workspace {
    display: flex;
    flex: 1;
    min-height: 0;
    border-top: 1px solid var(--light);
    border-bottom: 1px solid var(--light);
}

.splitter {
    flex: none;
    height: 5px;
    border-bottom: 1px solid var(--shadow);
}

/* Navigator */
.navigator {
    display: flex;
    flex-direction: column;
    flex: none;
    width: 263px;
    padding: 3px 9px 4px 4px;
    border-right: 1px solid var(--light);
}

.pane-grip {
    display: flex;
    align-items: center;
    gap: 3px;
    flex: none;
    height: 10px;
    margin-bottom: 3px;
}

.pane-grip .bar {
    flex: 1;
    height: 10px;
    background: linear-gradient(var(--shadow) 3px, #fff 3px 4px, var(--shadow) 4px 6px, #fff 6px 7px, var(--shadow) 7px);
}

.pane-grip button,
.side-grip button {
    width: 8px;
    line-height: 0;
}

.tree-box {
    display: grid;
    grid-template-columns: 1fr 16px;
    grid-template-rows: 1fr 16px;
    flex: 1;
    min-height: 0;
    padding: 3px 2px 1px;
    border: 1px solid;
    border-color: var(--light) var(--dark) var(--dark) var(--light);
    box-shadow: inset -1px -1px var(--shadow);
}

.tree {
    overflow: hidden;
    background: #fff;
    list-style: none;
    font: 10px/15px var(--mono);
}

.tree li {
    display: flex;
    align-items: center;
    height: 16px;
    padding-left: 18px;
    white-space: nowrap;
}

.tree i {
    flex: none;
    width: 19px;
    height: 16px;
    background-repeat: no-repeat;
}

.tree i + svg {
    margin-left: 1px;
}

.tree .v,
.tree .t {
    background-image: repeating-linear-gradient(var(--shadow) 0 1px, transparent 1px 2px);
    background-size: 1px 100%;
    background-position: 9px 0;
}

.tree .t {
    background-image: repeating-linear-gradient(var(--shadow) 0 1px, transparent 1px 2px), repeating-linear-gradient(to right, var(--shadow) 0 1px, transparent 1px 2px);
    background-size: 1px 100%, 10px 1px;
    background-position: 9px 0, 9px 8px;
}

.tree .l {
    background-image: repeating-linear-gradient(var(--shadow) 0 1px, transparent 1px 2px), repeating-linear-gradient(to right, var(--shadow) 0 1px, transparent 1px 2px);
    background-size: 1px 9px, 10px 1px;
    background-position: 9px 0, 9px 8px;
}

.tree svg {
    flex: none;
    width: 16px;
    height: 16px;
}

.tree .box {
    display: block;
    width: 9px;
    height: 9px;
    margin: 4px 5px;
}

.tree .device {
    width: 15px;
    margin-left: 1px;
}

.tree span {
    margin-left: 2px;
    padding: 0 2px;
}

.tree .selected {
    background: var(--face);
}

/* Scrollbars */
.scrollbar {
    display: flex;
    flex-direction: column;
    flex: none;
    width: 16px;
}

.scrollbar.horizontal {
    flex-direction: row;
    width: auto;
}

.scrollbar button {
    display: flex;
    align-items: center;
    justify-content: center;
    flex: none;
    width: 16px;
    height: 16px;
}

.scrollbar button,
.thumb {
    background: var(--face);
    box-shadow: inset -1px -1px var(--dark), inset 1px 1px var(--light), inset -2px -2px var(--shadow);
}

.track {
    display: grid;
    flex: 1;
    background: repeating-conic-gradient(#fff 0 25%, var(--face) 0 50%) 0 0 / 2px 2px;
}

.tree-track {
    grid-template-rows: 58fr 251fr 87fr;
}

.params-track {
    grid-template-rows: 75fr 28fr 257fr;
}

.messages-track {
    grid-template-rows: 39fr 13fr;
}

.tree-track .thumb,
.params-track .thumb,
.messages-track .thumb {
    grid-row: 2;
}

.tree-htrack {
    grid-template-columns: 151fr 43fr;
}

/* Tabs */
.tab-row {
    display: flex;
    align-items: flex-start;
    flex: none;
}

.tab {
    display: flex;
    align-items: center;
    gap: 5px;
    height: 20px;
    padding: 0 4px 0 6px;
    border: 1px solid;
    border-color: transparent var(--dark) var(--dark) var(--light);
    box-shadow: inset -1px -1px var(--shadow);
    white-space: nowrap;
}

.navigator-tab {
    align-self: flex-start;
    flex: none;
    padding: 0 6px;
}

.tab.active {
    height: 23px;
}

/* Expert list window */
.documents {
    position: relative;
    display: flex;
    flex-direction: column;
    flex: 1;
    min-width: 0;
    padding-left: 3px;
}

.window {
    position: relative;
    display: flex;
    flex-direction: column;
    flex: 1;
    min-height: 0;
    margin: 3px 3px 2px 0;
    border: 1px solid #000;
    box-shadow: 0 0 0 1px var(--shadow);
}

.list-toolbar {
    display: flex;
    flex: none;
    height: 31px;
    border-bottom: 1px solid var(--dark);
    box-shadow: inset 0 1px var(--light);
}

.group {
    display: flex;
    align-items: center;
    padding: 0 7px 0 3px;
    border-right: 1px solid var(--shadow);
    box-shadow: 1px 0 var(--light);
}

.group::before {
    margin-right: 6px;
}

.search::before {
    margin-right: 16px;
}

.combo {
    appearance: none;
    height: 22px;
    border: 1px solid;
    border-color: var(--dark) var(--light) var(--light) var(--dark);
    border-radius: 0;
    background: #fff url("data:image/svg+xml,%3csvg xmlns='http://www.w3.org/2000/svg' width='15' height='20'%3e%3cpath d='M0 0h15v20H0z' fill='%23404040'/%3e%3cpath d='M0 0h14v19H0z' fill='white'/%3e%3cpath d='M1 1h13v18H1z' fill='%23d4d0c8'/%3e%3cpath d='M4 8h7l-3.500 4z'/%3e%3c/svg%3e") no-repeat right 0 top 0;
    color: #000;
    font: bold 14px/20px var(--sans);
    padding: 0 16px 0 1px;
}

.search-text {
    width: 148px;
    margin-right: 1px;
}

.number-format {
    width: 97px;
    margin: 0 2px 0 1px;
}

.list-tabs {
    display: flex;
    flex: none;
    height: 21px;
    padding: 2px 0 0 2px;
}

.list-tabs button {
    height: 20px;
    padding: 0 6px;
    border: 1px solid;
    border-color: var(--light) var(--dark) var(--face) var(--light);
}

.list-panel {
    display: flex;
    flex: 1;
    min-height: 0;
    margin-right: 1px;
    padding: 4px 6px 4px 4px;
    border: 1px solid;
    border-color: var(--light) var(--dark) var(--dark) var(--light);
}

.table-frame {
    display: flex;
    flex: 1;
    min-width: 0;
    border: 2px solid;
    border-color: var(--dark) var(--light) var(--light) var(--shadow);
}

.table-clip {
    flex: 1;
    min-width: 0;
    margin-right: 1px;
    overflow: hidden;
}

table {
    width: 100%;
    table-layout: fixed;
    border-collapse: separate;
    border-spacing: 0;
}

th,
td {
    overflow: hidden;
    padding: 0 1px;
    border-right: 1px solid var(--shadow);
    border-bottom: 1px solid var(--shadow);
    line-height: 15px;
    text-align: left;
    white-space: nowrap;
}

th {
    line-height: 18px;
}

tbody td:first-child,
.num {
    padding-right: 4px;
    text-align: right;
}

.c-num { width: 48px; }
.c-param { width: 68px; }
.c-value { width: 151px; }
.c-unit { width: 30px; }
.c-mod { width: 80px; }
.c-access { width: 79px; }
.c-min { width: 61px; }
.c-max { width: 63px; }
.c-level { width: 89px; }

.exp {
    padding-left: 3px;
}

.exp svg {
    width: 9px;
    height: 9px;
    margin-right: 3px;
    vertical-align: -2px;
}

.online {
    background: #ff0;
}

.filters td {
    background: #fff;
}

.filters .off,
.filters .num {
    background: var(--face);
}

.nofilter {
    display: block;
    width: 14px;
    height: 13px;
    margin: 2px 0 0 auto;
}

.filters select {
    display: block;
    appearance: none;
    width: 100%;
    height: 15px;
    border: none;
    border-radius: 0;
    background: url("data:image/svg+xml,%3csvg xmlns='http://www.w3.org/2000/svg' width='14' height='13'%3e%3cpath d='M0 0h14v13H0z' fill='%23404040'/%3e%3cpath d='M0 0h13v12H0z' fill='white'/%3e%3cpath d='M1 1h12v11H1z' fill='%23d4d0c8'/%3e%3cpath d='M3 4h8l-4 5z'/%3e%3c/svg%3e") no-repeat right 0 top 1px;
    color: #000;
    font: 11px/15px var(--sans);
}

.params tbody td:nth-child(2) {
    background: #80ff80;
}

.params tbody td:nth-child(4) {
    background: #fff;
}

.params .read td:nth-child(2) {
    background: #ffff80;
}

.params .read td:nth-child(4) {
    background: var(--face);
}

.params .current td {
    background: #80ff80;
}

.params .current td:first-child {
    background: #b8b8b8;
}

.params .current td:nth-child(4) {
    background: #fff;
}

.edit {
    display: block;
    width: 8px;
    height: 15px;
    border: none;
    border-right: 1px solid #000;
    background: #fff;
    font: 11px/15px var(--sans);
}

.reject-tip {
    position: absolute;
    top: 290px;
    right: 0;
    padding: 2px 0 1px 2px;
    background: #ff2651;
    color: #ffe8ec;
    line-height: 17px;
    white-space: nowrap;
}

.watermark {
    position: absolute;
    left: 268px;
    bottom: 54px;
    transform: rotate(-30deg);
    transform-origin: 0 100%;
    color: rgba(255, 255, 255, 0.38);
    font-size: 26px;
    line-height: 30px;
    white-space: nowrap;
    pointer-events: none;
}

.brand {
    display: flex;
    gap: 32px;
    padding-left: 12px;
    font-size: 40px;
    line-height: 44px;
}

.documents .tab-row {
    height: 24px;
}

.documents .tab {
    padding: 0 1px 0 5px;
}

.documents .tab.active {
    gap: 7px;
    padding-right: 6px;
}

.tab-fill {
    flex: 1;
    border-top: 1px solid var(--shadow);
}

/* Output pane */
.output {
    display: flex;
    flex: none;
}

.side-grip {
    display: flex;
    flex-direction: column;
    align-items: center;
    gap: 3px;
    width: 14px;
    padding: 5px 0 5px;
}

.side-grip .bar {
    flex: 1;
    width: 9px;
    background: linear-gradient(to right, var(--shadow) 3px, #fff 3px 4px, var(--shadow) 4px 5px, #fff 5px 6px, var(--shadow) 6px);
}

.output-main {
    flex: 1;
    min-width: 0;
    padding: 4px 4px 0 0;
}

.output-panel {
    padding: 0 7px 4px 8px;
    border: 1px solid;
    border-color: var(--light) var(--dark) var(--dark) var(--light);
}

.checks {
    display: flex;
    align-items: center;
    height: 30px;
    padding-top: 6px;
}

.checks .help {
    display: flex;
    align-items: center;
    justify-content: center;
    width: 20px;
    height: 21px;
    margin: -4px 10px 0 2px;
    box-shadow: inset -1px -1px var(--dark), inset 1px 1px var(--light), inset -2px -2px var(--shadow);
}

.checks label {
    display: flex;
    align-items: center;
    gap: 5px;
    min-width: 125px;
}

.checks label + label {
    min-width: 129px;
}

.checks input {
    appearance: none;
    width: 13px;
    height: 13px;
    border: 1px solid;
    border-color: var(--shadow) var(--light) var(--light) var(--shadow);
    background: #fff;
    box-shadow: inset 1px 1px var(--dark);
}

.checks input:checked {
    background: #fff url("data:image/svg+xml,%3csvg xmlns='http://www.w3.org/2000/svg' width='11' height='11'%3e%3cpath d='M2 5l2.500 3L9 3' fill='none' stroke='black' stroke-width='2'/%3e%3c/svg%3e");
}

.messages tbody td {
    background: #fff;
    border-color: #fff;
}

.messages tbody td:first-child {
    background: var(--face);
    border-color: var(--shadow);
}

.output-tabs {
    height: 26px;
    padding-left: 4px;
}

.output-tabs .tab {
    gap: 4px;
    margin-right: 1px;
    padding: 0 2px 0 4px;
}

.output-tabs .tab.active {
    gap: 7px;
    height: 22px;
    margin-right: 0;
}

.output-tabs .alarms {
    background: #0a246a;
    color: #fff;
}

/* Status bar */
.status-bar {
    display: flex;
    align-items: center;
    gap: 3px;
    flex: none;
    height: 20px;
    padding: 3px 0 0 1px;
    border-top: 1px solid var(--shadow);
    box-shadow: inset 0 1px var(--light);
    font: 10px/15px var(--mono);
    white-space: nowrap;
}

.hint {
    flex: 1;
}

.cell {
    width: 23px;
    height: 16px;
    border: 1px solid;
    border-color: var(--shadow) var(--light) var(--light) var(--shadow);
}

.adapter {
    width: 213px;
}

.mode {
    width: 213px;
    padding-left: 1px;
    background: #ff0;
    font: bold 13px/16px var(--sans);
}

.caps {
    width: 20px;
}

.last {
    width: 28px;
}
```
